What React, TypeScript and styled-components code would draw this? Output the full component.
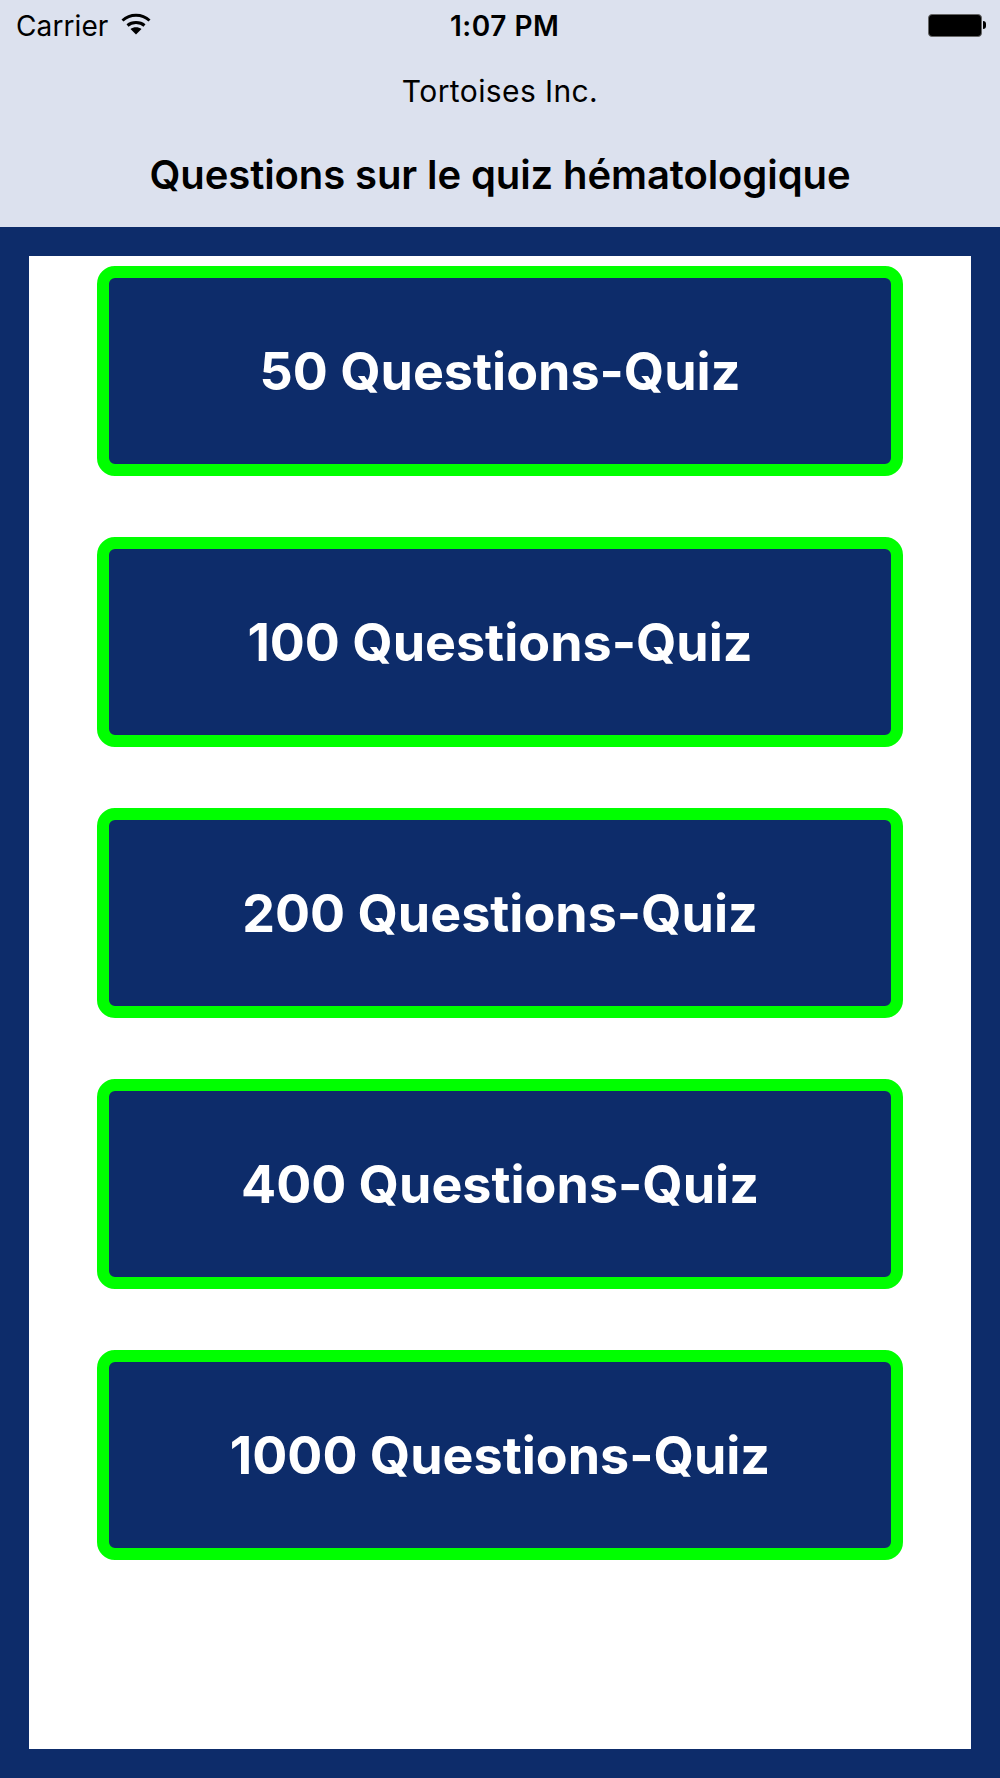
import React from "react";
import styled, { createGlobalStyle } from "styled-components";

const quizSizes = [50, 100, 200, 400, 1000];

function WifiIcon() {
  return (
    <svg width="30" height="22" viewBox="0 0 30 22">
      <path d="M1.5 7.5 C9 0.6 21 0.6 28.5 7.5" fill="none" stroke="#000" strokeWidth="3" />
      <path d="M6.5 12.5 C11 8.6 19 8.6 23.5 12.5" fill="none" stroke="#000" strokeWidth="3" />
      <path d="M15 21.5 L9.5 16 C12.5 13.8 17.5 13.8 20.5 16 Z" fill="#000" />
    </svg>
  );
}

function App() {
  return (
    <Page>
      <GlobalStyle />
      <Header>
        <StatusBar>
          <StatusLeft>
            <Carrier>Carrier</Carrier>
            <WifiIcon />
          </StatusLeft>
          <Time>1:07 PM</Time>
          <StatusRight>
            <BatteryBody />
            <BatteryCap />
          </StatusRight>
        </StatusBar>
        <Company>Tortoises Inc.</Company>
        <Title>Questions sur le quiz hématologique</Title>
      </Header>
      <Frame>
        <Content>
          {quizSizes.map((size) => (
            <QuizButton key={size}>{size} Questions-Quiz</QuizButton>
          ))}
        </Content>
      </Frame>
    </Page>
  );
}

const GlobalStyle = createGlobalStyle`
  html, body {
    margin: 0;
    padding: 0;
  }
  body {
    font-family: Inter, "Liberation Sans", sans-serif;
  }
`;

const Page = styled.div`
  width: 1000px;
  height: 1778px;
  display: flex;
  flex-direction: column;
  background-color: #0d2c6a;
`;

const Header = styled.header`
  height: 227px;
  background-color: #dce1ee;
  color: #000;
  display: flex;
  flex-direction: column;
  align-items: center;
`;

const StatusBar = styled.div`
  width: 100%;
  box-sizing: border-box;
  height: 52px;
  padding: 0 14px 0 16px;
  display: grid;
  grid-template-columns: 434px auto 1fr;
  align-items: center;
`;

const StatusLeft = styled.div`
  display: flex;
  align-items: center;
  gap: 13px;

  svg {
    margin-bottom: 5px;
  }
`;

const Carrier = styled.span`
  font-size: 28px;
  font-weight: 400;
  letter-spacing: 0.1px;
`;

const Time = styled.span`
  font-size: 28px;
  font-weight: 600;
  letter-spacing: 0.5px;
`;

const StatusRight = styled.div`
  display: flex;
  align-items: center;
  justify-content: flex-end;
  gap: 1px;
  margin-bottom: 2px;
`;

const BatteryBody = styled.div`
  width: 54px;
  height: 23px;
  box-sizing: border-box;
  background-color: #000;
  border: 1px solid #666;
  border-radius: 4px;
`;

const BatteryCap = styled.div`
  width: 3px;
  height: 8px;
  background-color: #000;
  border-radius: 0 3px 3px 0;
`;

const Company = styled.div`
  margin-top: 22px;
  font-size: 30px;
  line-height: 34px;
  font-weight: 400;
  letter-spacing: 0.4px;
`;

const Title = styled.h1`
  margin: 44px 0 0;
  font-size: 40px;
  line-height: 46px;
  font-weight: 600;
  letter-spacing: -0.1px;
`;

const Frame = styled.main`
  flex: 1;
  padding: 29px;
  display: flex;
`;

const Content = styled.div`
  flex: 1;
  background-color: #fff;
  padding: 10px 68px 0;
  display: flex;
  flex-direction: column;
  gap: 61px;
`;

const QuizButton = styled.button`
  height: 210px;
  box-sizing: border-box;
  background-color: #0d2c6a;
  border: 12px solid #00ff00;
  border-radius: 18px;
  color: #fff;
  font-family: inherit;
  font-size: 52px;
  font-weight: 700;
  padding: 1px 0 0;
`;

export default App;
